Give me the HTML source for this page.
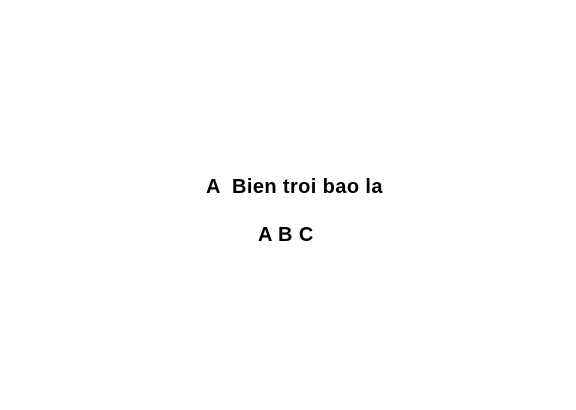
<!DOCTYPE html>
<html><head><style>
body{margin:0;width:576px;height:410px;background:#fff;position:relative;font-family:"Liberation Sans",sans-serif;font-weight:bold;color:#000}
div{position:absolute;white-space:pre;font-size:20px;line-height:1;letter-spacing:0.4px}
</style></head><body>
<div style="left:206px;top:177px">A  Bien troi bao la</div>
<div style="left:258px;top:225px">A B C</div>
</body></html>
